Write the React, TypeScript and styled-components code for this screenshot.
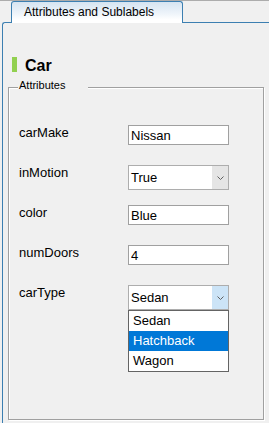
import styled, { createGlobalStyle } from "styled-components";

type Field =
    | { kind: "text"; name: string; value: string }
    | { kind: "combo"; name: string; value: string; open?: boolean; options?: string[]; selected?: string }

const fields: Field[] = [
    { kind: "text", name: "carMake", value: "Nissan" },
    { kind: "combo", name: "inMotion", value: "True" },
    { kind: "text", name: "color", value: "Blue" },
    { kind: "text", name: "numDoors", value: "4" },
    {
        kind: "combo",
        name: "carType",
        value: "Sedan",
        open: true,
        options: ["Sedan", "Hatchback", "Wagon"],
        selected: "Hatchback",
    },
]

const Chevron = () => (
    <svg width="7" height="4" viewBox="0 0 7 4">
        <polyline points="0.5,0.5 3.5,3.5 6.5,0.5" fill="none" stroke="#606060" strokeWidth="1" />
    </svg>
)

const App = () => {
    return (
        <Window>
            <GlobalStyle />
            <TabStrip>
                <Tab>Attributes and Sublabels</Tab>
            </TabStrip>
            <Panel>
                <Heading>
                    <Bar />
                    <Title>Car</Title>
                </Heading>
                <GroupBox>
                    <Legend>Attributes</Legend>
                    <Fields>
                        {fields.map((f) => (
                            <Row key={f.name}>
                                <Label>{f.name}</Label>
                                {f.kind === "text" ? (
                                    <TextBox readOnly value={f.value} />
                                ) : (
                                    <Combo>
                                        <ComboText>{f.value}</ComboText>
                                        <Arrow $open={!!f.open}>
                                            <Chevron />
                                        </Arrow>
                                        {f.open && (
                                            <DropList>
                                                {f.options?.map((o) => (
                                                    <Option key={o} $selected={o === f.selected}>
                                                        {o}
                                                    </Option>
                                                ))}
                                            </DropList>
                                        )}
                                    </Combo>
                                )}
                            </Row>
                        ))}
                    </Fields>
                </GroupBox>
            </Panel>
        </Window>
    )
}

export default App;

const GlobalStyle = createGlobalStyle`
  html, body {
    margin: 0;
    padding: 0;
    background: #f0f0f0;
  }
  body {
    font-family: "Liberation Sans", Arial, sans-serif;
    color: #000;
  }
`;
const Window = styled.div`
  width: 269px;
  height: 423px;
  overflow: hidden;
  display: flex;
  flex-direction: column;
  background: #f0f0f0;
`;
const TabStrip = styled.div`
  height: 21px;
  flex: none;
  border-top: 1px solid #acacac;
  padding-left: 11px;
  display: flex;
  align-items: flex-start;
`;
const Tab = styled.div`
  position: relative;
  z-index: 1;
  box-sizing: border-box;
  width: 172px;
  height: 22px;
  border: 1px solid #3c7fb1;
  border-bottom: none;
  border-radius: 3px 3px 0 0;
  background: linear-gradient(#d6e4f1, #eef4fa 55%, #ffffff 85%);
  padding: 3px 0 0 12px;
  font-size: 12px;
  line-height: 14px;
  white-space: nowrap;
`;
const Panel = styled.div`
  flex: 1;
  margin-left: 2px;
  border-left: 1px solid #3c7fb1;
  border-top: 1px solid #3c7fb1;
  border-top-left-radius: 3px;
  display: flex;
  flex-direction: column;
  padding-top: 34px;
`;
const Heading = styled.div`
  display: flex;
  align-items: flex-start;
  gap: 8px;
  padding-left: 9px;
  height: 17px;
`;
const Bar = styled.span`
  width: 5px;
  height: 15px;
  background: #92d050;
`;
const Title = styled.h1`
  margin: 0;
  font-size: 16px;
  font-weight: bold;
  line-height: 17px;
`;
const GroupBox = styled.div`
  position: relative;
  box-sizing: border-box;
  margin: 13px 0 0 5px;
  width: 256px;
  height: 333px;
  border: 1px solid #a0a0a0;
  box-shadow: inset 1px 1px 0 #fff, 1px 1px 0 #fff;
  padding: 37px 0 0 10px;
`;
const Legend = styled.span`
  position: absolute;
  top: -9px;
  left: 9px;
  box-sizing: border-box;
  width: 70px;
  padding-left: 1px;
  background: #f0f0f0;
  font-size: 11px;
  line-height: 13px;
`;
const Fields = styled.div`
  display: flex;
  flex-direction: column;
`;
const Row = styled.div`
  display: grid;
  grid-template-columns: 109px 101px;
  align-items: start;
  height: 40px;
`;
const Label = styled.div`
  font-size: 13px;
  line-height: 16px;
`;
const TextBox = styled.input`
  box-sizing: border-box;
  width: 101px;
  height: 20px;
  margin: 0;
  border: 1px solid #a0a0a0;
  background: #fff;
  padding: 0 0 0 2px;
  font-family: "Liberation Sans", Arial, sans-serif;
  font-size: 13px;
  color: #000;
  outline: none;
`;
const Combo = styled.div`
  position: relative;
  box-sizing: border-box;
  width: 101px;
  height: 25px;
  border: 1px solid #adadad;
  background: #fff;
  display: flex;
`;
const ComboText = styled.div`
  flex: 1;
  padding-left: 2px;
  font-size: 13px;
  line-height: 23px;
`;
const Arrow = styled.div<{ $open: boolean }>`
  width: 16px;
  background: ${(p) => (p.$open ? "#cce4f7" : "#e5e5e5")};
  display: flex;
  align-items: center;
  justify-content: center;
`;
const DropList = styled.div`
  position: absolute;
  z-index: 2;
  top: calc(100% + 1px);
  left: -1px;
  box-sizing: border-box;
  width: 101px;
  border: 1px solid #646464;
  background: #fff;
`;
const Option = styled.div<{ $selected: boolean }>`
  height: 20px;
  padding-left: 4px;
  font-size: 13px;
  line-height: 20px;
  background: ${(p) => (p.$selected ? "#0078d7" : "#fff")};
  color: ${(p) => (p.$selected ? "#fff" : "#000")};
`;
